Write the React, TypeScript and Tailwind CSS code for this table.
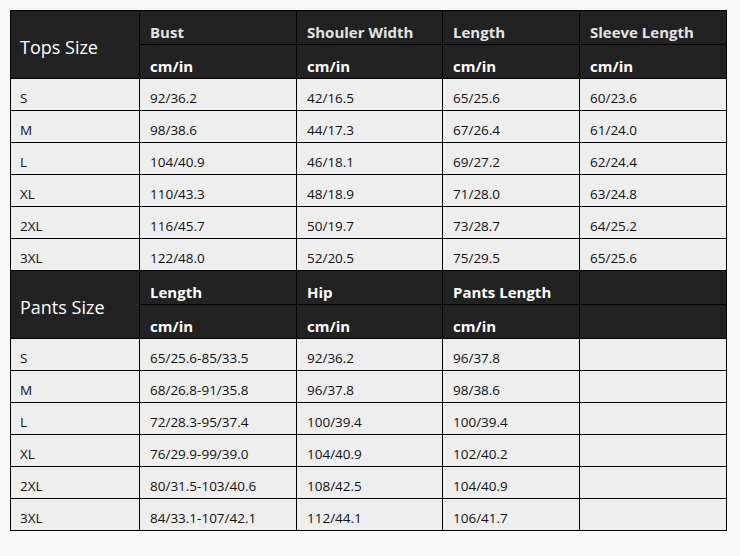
import React from "react";

const tops = [
  ["S", "92/36.2", "42/16.5", "65/25.6", "60/23.6"],
  ["M", "98/38.6", "44/17.3", "67/26.4", "61/24.0"],
  ["L", "104/40.9", "46/18.1", "69/27.2", "62/24.4"],
  ["XL", "110/43.3", "48/18.9", "71/28.0", "63/24.8"],
  ["2XL", "116/45.7", "50/19.7", "73/28.7", "64/25.2"],
  ["3XL", "122/48.0", "52/20.5", "75/29.5", "65/25.6"],
];

const pants = [
  ["S", "65/25.6-85/33.5", "92/36.2", "96/37.8", ""],
  ["M", "68/26.8-91/35.8", "96/37.8", "98/38.6", ""],
  ["L", "72/28.3-95/37.4", "100/39.4", "100/39.4", ""],
  ["XL", "76/29.9-99/39.0", "104/40.9", "102/40.2", ""],
  ["2XL", "80/31.5-103/40.6", "108/42.5", "104/40.9", ""],
  ["3XL", "84/33.1-107/42.1", "112/44.1", "106/41.7", ""],
];

function Header({ title, cols, light }: { title: string; cols: string[]; light: boolean }) {
  return (
    <>
      <div className="row-span-2 bg-[#222222] text-white text-[18px] flex items-center pl-[9px] pt-[6px]">
        {title}
      </div>
      {cols.map((c, i) => (
        <div
          key={"h" + i}
          className={`h-[33px] bg-[#222222] font-bold text-[15px] flex items-center pl-[10px] pt-[10px] ${light ? "text-[#e4e4e4]" : "text-white"}`}
        >
          {c}
        </div>
      ))}
      {cols.map((c, i) => (
        <div
          key={"u" + i}
          className="h-[33px] bg-[#222222] font-bold text-[15px] text-white flex items-center pl-[10px] pt-[10px]"
        >
          {c ? "cm/in" : ""}
        </div>
      ))}
    </>
  );
}

function Rows({ rows }: { rows: string[][] }) {
  return (
    <>
      {rows.map((r, ri) =>
        r.map((v, ci) => (
          <div
            key={ri + "-" + ci}
            className={`h-[31px] bg-[#eeeeee] text-[#111111] text-[13.5px] flex items-center pt-[8px] ${ci === 0 ? "pl-[9px]" : "pl-[10px]"}`}
          >
            {v}
          </div>
        ))
      )}
    </>
  );
}

export default function App() {
  return (
    <div
      className="w-[740px] h-[556px] bg-[#f8f8f8] pt-[10px] pl-[10px]"
      style={{ fontFamily: '"Open Sans", "Noto Sans", sans-serif' }}
    >
      <div className="w-[717px] grid grid-cols-[128px_156px_145px_136px_146px] gap-px bg-black p-px">
        <Header title="Tops Size" cols={["Bust", "Shouler Width", "Length", "Sleeve Length"]} light={true} />
        <Rows rows={tops} />
        <Header title="Pants Size" cols={["Length", "Hip", "Pants Length", ""]} light={false} />
        <Rows rows={pants} />
      </div>
    </div>
  );
}
